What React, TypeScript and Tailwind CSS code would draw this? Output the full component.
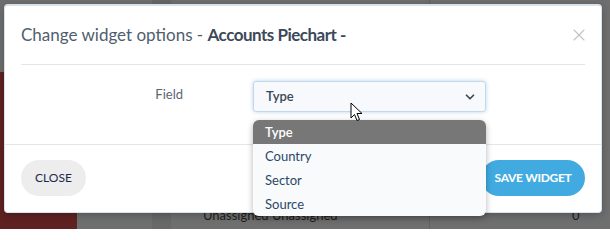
import { ChevronDown, X } from "lucide-react";

const options = ["Type", "Country", "Sector", "Source"];

function Backdrop() {
  return (
    <div className="absolute inset-0 bg-[#6f6f6f]">
      <div className="absolute left-[152px] top-0 h-full w-[19px] bg-[#686868]" />
      <div className="absolute left-[429px] top-0 h-full w-px bg-[#626262]" />
      <div className="absolute left-0 top-[72px] h-[157px] w-[77px] bg-[#5f2121]" />
      <div className="absolute left-[203px] top-[206px] text-[13px] text-[#1e1e1e]">Unassigned Unassigned</div>
      <div className="absolute left-[572px] top-[206px] text-[13px] text-[#1e1e1e]">0</div>
    </div>
  );
}

function Cursor() {
  return (
    <svg className="absolute left-[350px] top-[102px]" width="14" height="20" viewBox="0 0 14 20">
      <path d="M1 1 L1 16 L4.5 12.5 L7 18.5 L9.5 17.5 L7 11.5 L12 11.5 Z" fill="#ffffff" stroke="#000000" strokeWidth="1" strokeLinejoin="round" />
    </svg>
  );
}

export default function App() {
  return (
    <div className="relative h-[229px] w-[610px] overflow-hidden font-['Lato','Noto_Sans',sans-serif]">
      <Backdrop />

      <div className="relative p-[4px]">
        <div className="h-[209px] w-[598px] rounded-[4px] border border-t-2 border-[#d6e2ee] bg-white shadow-[0_2px_8px_rgba(0,0,0,0.25)]">
          <div className="mx-[16px] flex items-center justify-between border-b border-[#e6e6e6] py-[16px]">
            <h1 className="text-[17px] leading-[26px] text-[#4f5e6f]">
              Change widget options -{" "}
              <span className="font-bold tracking-[-0.5px] text-[#3c4959]">Accounts Piechart -</span>
            </h1>
            <X size={20} strokeWidth={1.3} className="mr-[-4px] text-[#c2c2c2]" />
          </div>

          <div className="flex px-[16px] pb-[32px] pt-[16px]">
            <label className="w-[162px] pt-[5px] text-right text-[13px] leading-[17px] text-[#5b6572]">Field</label>
            <div className="ml-[70px] flex h-[31px] w-[233px] items-center justify-between rounded-[3px] border border-[#c4d8ec] bg-[#f7f9fc] pl-[12px] pr-[8px] shadow-[0_0_4px_rgba(102,160,220,0.45)]">
              <span className="text-[13px] font-semibold text-[#3a4858]">Type</span>
              <ChevronDown size={14} strokeWidth={3} className="text-[#3d4a5a]" />
            </div>
          </div>

          <div className="flex items-center justify-between border-t border-[#e6e6e6] px-[16px] py-[15px]">
            <button className="h-[36px] w-[65px] rounded-full bg-[#ededed] text-[12px] font-normal text-[#1c2b4a]">CLOSE</button>
            <button className="h-[36px] w-[104px] rounded-full bg-[#41abe1] text-[12px] font-bold tracking-[-0.3px] text-white">SAVE WIDGET</button>
          </div>
        </div>
      </div>

      <ul className="absolute left-[253px] top-[120px] w-[233px] overflow-hidden rounded-[6px] bg-[#f8fafc] shadow-[0_2px_6px_rgba(0,0,0,0.3)]">
        {options.map((opt, i) => (
          <li
            key={opt}
            className={
              i === 0
                ? "h-[24px] bg-[#777777] pl-[12px] text-[13px] font-semibold leading-[24px] text-white"
                : "h-[24px] pl-[12px] text-[13px] leading-[24px] text-[#2c4866]"
            }
          >
            {opt}
          </li>
        ))}
      </ul>

      <Cursor />
    </div>
  );
}
